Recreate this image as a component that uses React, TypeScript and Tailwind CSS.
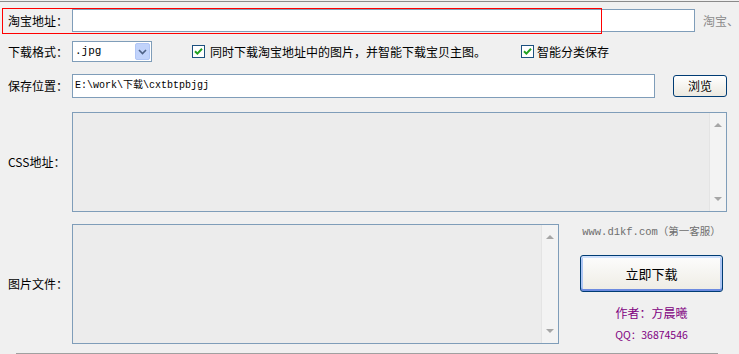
import React from "react";

const Check = () => (
  <span className="w-[13px] h-[13px] border border-[#1c5180] bg-white flex items-center justify-center shrink-0">
    <svg width="9" height="9" viewBox="0 0 9 9">
      <path d="M1 4.2 L3.4 6.6 L8 1.8" stroke="#21a121" strokeWidth="2" fill="none" />
    </svg>
  </span>
);

const ScrollBar = () => (
  <div className="w-[17px] h-full bg-[#f3f3f3] border-l border-[#e4e4e4] flex flex-col items-center justify-between py-[9px]">
    <svg width="8" height="5" viewBox="0 0 8 5">
      <path d="M0 5 L4 1 L8 5 Z" fill="#a6a6a6" />
    </svg>
    <svg width="8" height="5" viewBox="0 0 8 5">
      <path d="M0 0 L8 0 L4 4 Z" fill="#a6a6a6" />
    </svg>
  </div>
);

export default function App() {
  const cjk = "font-['Noto_Sans_CJK_SC',sans-serif]";
  const mono = "font-['Liberation_Mono','Noto_Sans_CJK_SC',monospace]";
  return (
    <div className={`relative w-[739px] h-[354px] bg-[#f0f0f0] overflow-hidden text-[12px] text-black ${cjk}`}>
      <div className="mt-px h-px bg-[#8a8a8a]" />

      {/* row 1 */}
      <div className="mt-[7px] h-[23px] flex items-center">
        <span className="w-[72px] pl-[8px] leading-none">淘宝地址：</span>
        <div className="w-[623px] h-full bg-white border border-[#7f9db9]" />
        <span className="ml-[8px] text-[#8c8c8c] whitespace-nowrap leading-none">淘宝、</span>
      </div>
      <div className="absolute left-[2px] top-[8px] w-[600px] h-[26px] border border-[#ff0000] pointer-events-none" />

      {/* row 2 */}
      <div className="mt-[9px] h-[21px] flex items-center">
        <span className="w-[72px] pl-[8px] leading-none">下载格式：</span>
        <div className="w-[80px] h-full bg-white border border-[#7f9db9] flex items-center justify-between pl-[2px] pr-px">
          <span className={`${mono} text-[11px] leading-none`}>.jpg</span>
          <span className="w-[15px] h-[17px] rounded-[2px] bg-[#c1d3fb] border border-[#b1c6f5] flex items-center justify-center">
            <svg width="9" height="6" viewBox="0 0 9 6">
              <path d="M1 1 L4.5 4.5 L8 1" stroke="#4d6185" strokeWidth="1.6" fill="none" />
            </svg>
          </span>
        </div>
        <div className="ml-[40px] w-[329px] flex items-center">
          <Check />
          <span className="ml-[5px] leading-none whitespace-nowrap">同时下载淘宝地址中的图片，并智能下载宝贝主图。</span>
        </div>
        <Check />
        <span className="ml-[3px] leading-none whitespace-nowrap">智能分类保存</span>
      </div>

      {/* row 3 */}
      <div className="mt-[12px] h-[24px] flex items-center">
        <span className="w-[72px] pl-[8px] leading-none">保存位置：</span>
        <div className="w-[583px] h-full bg-white border border-[#7f9db9] flex items-center pl-[2px]">
          <span className={`${mono} text-[10px] leading-none`}>E:\work\下载\cxtbtpbjgj</span>
        </div>
        <button className="ml-[18px] w-[54px] h-[22px] rounded-[3px] border border-[#003c74] bg-gradient-to-b from-white to-[#ece9e0] flex items-center justify-center leading-none">
          浏览
        </button>
      </div>

      {/* row 4 */}
      <div className="mt-[14px] h-[100px] flex items-center">
        <span className="w-[72px] pl-[8px] leading-none">CSS地址：</span>
        <div className="w-[655px] h-full bg-[#ececec] border border-[#7f9db9] flex justify-end">
          <ScrollBar />
        </div>
      </div>

      {/* row 5 */}
      <div className="mt-[12px] h-[120px] flex">
        <span className="w-[72px] pl-[8px] leading-none self-center">图片文件：</span>
        <div className="w-[487px] h-full bg-[#ececec] border border-[#7f9db9] flex justify-end">
          <ScrollBar />
        </div>
        <div className="ml-[21px] w-[143px] flex flex-col items-center">
          <span className={`${mono} mt-[3px] text-[10.5px] text-[#6e6e6e] leading-none whitespace-nowrap`}>
            www.d1kf.com（第一客服）
          </span>
          <button className="mt-[17px] w-[143px] h-[37px] rounded-[3px] border border-[#003c74] bg-gradient-to-b from-[#fdfdfd] to-[#eeece4] shadow-[inset_0_-2px_0_#6d8be0,inset_0_2px_0_#cfe0fb,inset_2px_0_0_#aec6f4,inset_-2px_0_0_#aec6f4] flex items-center justify-center text-[13px] leading-none">
            立即下载
          </button>
          <span className="mt-[15px] text-[#800080] leading-none whitespace-nowrap">作者：方晨曦</span>
          <span className="mt-[11px] text-[#800080] text-[10.5px] leading-none whitespace-nowrap">QQ：36874546</span>
        </div>
      </div>

      <div className="mt-[9px] ml-[16px] w-[702px] h-px bg-[#a0a0a0]" />
    </div>
  );
}
